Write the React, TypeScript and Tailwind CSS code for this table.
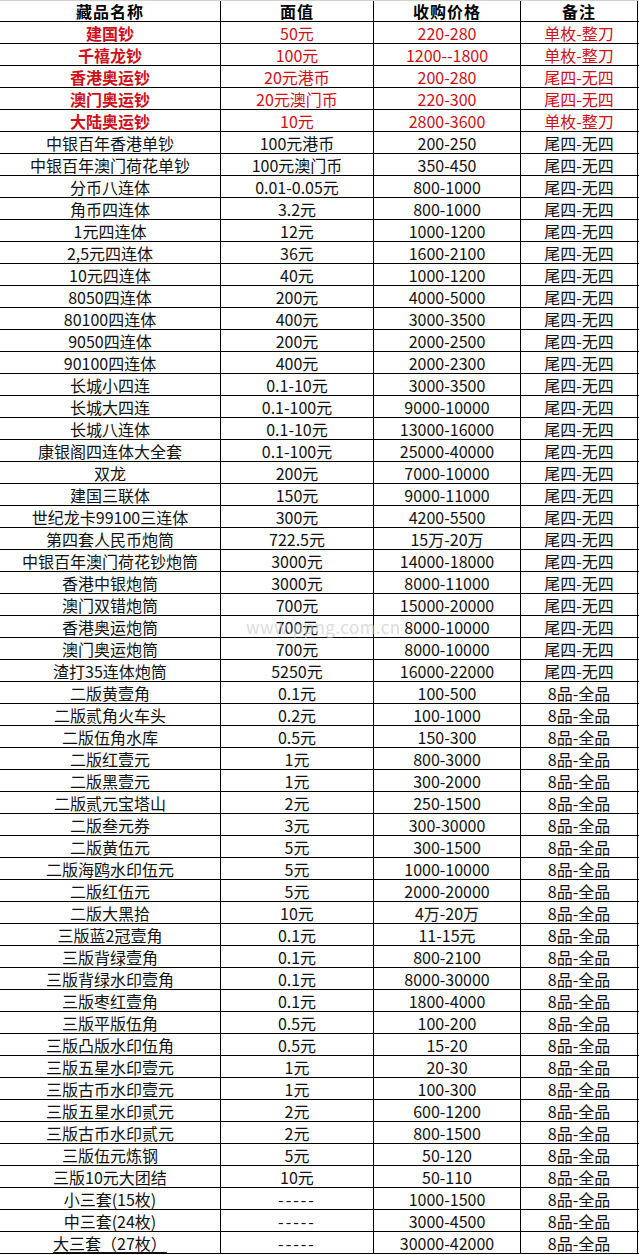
import React from 'react';

type Row = [string, string, string, string];

const redRows: Row[] = [
  ['建国钞', '50元', '220-280', '单枚-整刀'],
  ['千禧龙钞', '100元', '1200--1800', '单枚-整刀'],
  ['香港奥运钞', '20元港币', '200-280', '尾四-无四'],
  ['澳门奥运钞', '20元澳门币', '220-300', '尾四-无四'],
  ['大陆奥运钞', '10元', '2800-3600', '单枚-整刀'],
];

const W = '尾四-无四';
const Q = '8品-全品';

const rows: Row[] = [
  ['中银百年香港单钞', '100元港币', '200-250', W],
  ['中银百年澳门荷花单钞', '100元澳门币', '350-450', W],
  ['分币八连体', '0.01-0.05元', '800-1000', W],
  ['角币四连体', '3.2元', '800-1000', W],
  ['1元四连体', '12元', '1000-1200', W],
  ['2,5元四连体', '36元', '1600-2100', W],
  ['10元四连体', '40元', '1000-1200', W],
  ['8050四连体', '200元', '4000-5000', W],
  ['80100四连体', '400元', '3000-3500', W],
  ['9050四连体', '200元', '2000-2500', W],
  ['90100四连体', '400元', '2000-2300', W],
  ['长城小四连', '0.1-10元', '3000-3500', W],
  ['长城大四连', '0.1-100元', '9000-10000', W],
  ['长城八连体', '0.1-10元', '13000-16000', W],
  ['康银阁四连体大全套', '0.1-100元', '25000-40000', W],
  ['双龙', '200元', '7000-10000', W],
  ['建国三联体', '150元', '9000-11000', W],
  ['世纪龙卡99100三连体', '300元', '4200-5500', W],
  ['第四套人民币炮筒', '722.5元', '15万-20万', W],
  ['中银百年澳门荷花钞炮筒', '3000元', '14000-18000', W],
  ['香港中银炮筒', '3000元', '8000-11000', W],
  ['澳门双错炮筒', '700元', '15000-20000', W],
  ['香港奥运炮筒', '700元', '8000-10000', W],
  ['澳门奥运炮筒', '700元', '8000-10000', W],
  ['渣打35连体炮筒', '5250元', '16000-22000', W],
  ['二版黄壹角', '0.1元', '100-500', Q],
  ['二版贰角火车头', '0.2元', '100-1000', Q],
  ['二版伍角水库', '0.5元', '150-300', Q],
  ['二版红壹元', '1元', '800-3000', Q],
  ['二版黑壹元', '1元', '300-2000', Q],
  ['二版贰元宝塔山', '2元', '250-1500', Q],
  ['二版叁元券', '3元', '300-30000', Q],
  ['二版黄伍元', '5元', '300-1500', Q],
  ['二版海鸥水印伍元', '5元', '1000-10000', Q],
  ['二版红伍元', '5元', '2000-20000', Q],
  ['二版大黑拾', '10元', '4万-20万', Q],
  ['三版蓝2冠壹角', '0.1元', '11-15元', Q],
  ['三版背绿壹角', '0.1元', '800-2100', Q],
  ['三版背绿水印壹角', '0.1元', '8000-30000', Q],
  ['三版枣红壹角', '0.1元', '1800-4000', Q],
  ['三版平版伍角', '0.5元', '100-200', Q],
  ['三版凸版水印伍角', '0.5元', '15-20', Q],
  ['三版五星水印壹元', '1元', '20-30', Q],
  ['三版古币水印壹元', '1元', '100-300', Q],
  ['三版五星水印贰元', '2元', '600-1200', Q],
  ['三版古币水印贰元', '2元', '800-1500', Q],
  ['三版伍元炼钢', '5元', '50-120', Q],
  ['三版10元大团结', '10元', '50-110', Q],
  ['小三套(15枚)', '-----', '1000-1500', Q],
  ['中三套(24枚)', '-----', '3000-4500', Q],
  ['大三套（27枚）', '-----', '30000-42000', Q],
];

const cell = 'flex items-center justify-center border-r border-black whitespace-nowrap';

function TableRow({ row, red, last }: { row: Row; red?: boolean; last?: boolean }) {
  const color = red ? 'text-[#d00f16]' : 'text-[#111]';
  return (
    <div className={`flex h-[22px] border-b border-black text-[16px] leading-none ${color}`}>
      <div className={`${cell} w-[221px] ${red ? 'font-bold' : ''}`}>
        <span className={last ? 'underline underline-offset-2' : ''}>{row[0]}</span>
      </div>
      <div className={`${cell} w-[153px]`}>
        <span className={row[1] === '-----' ? 'tracking-[2px]' : ''}>{row[1]}</span>
      </div>
      <div className={`${cell} w-[147px]`}>{row[2]}</div>
      <div className={`${cell} w-[117px]`}>{row[3]}</div>
    </div>
  );
}

export default function App() {
  return (
    <div
      className="relative w-[639px] h-[1255px] bg-white overflow-hidden"
      style={{ fontFamily: '"Noto Sans CJK SC", "Liberation Sans", sans-serif' }}
    >
      {/* Header */}
      <div className="flex h-[22px] border-t border-t-[#d0d0d0] border-b border-black text-[16px] font-bold leading-none text-black">
        <div className={`${cell} w-[221px] tracking-[1px]`}>藏品名称</div>
        <div className={`${cell} w-[153px] tracking-[1px]`}>面值</div>
        <div className={`${cell} w-[147px] tracking-[1px]`}>收购价格</div>
        <div className={`${cell} w-[117px] tracking-[1px]`}>备注</div>
      </div>
      {redRows.map((r, i) => (
        <TableRow key={'r' + i} row={r} red />
      ))}
      {rows.map((r, i) => (
        <TableRow key={i} row={r} last={i === rows.length - 1} />
      ))}

      {/* watermark */}
      <div className="absolute left-[246px] top-[618px] text-[17px] leading-none text-[#c8c8c8] opacity-60 pointer-events-none tracking-wide">
        www.ppng.com.cn
      </div>
    </div>
  );
}
